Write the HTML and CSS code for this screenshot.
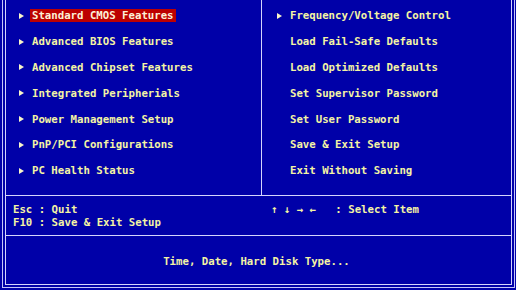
FILE: index.html
```html
<!DOCTYPE html>
<html>
<head>
  <title>CMOS Setup Utility</title>
  <link rel="stylesheet" href="styles.css">
</head>
<body>
  <div class="outer">
    <div class="inner">
      <div class="menu">
        <ul class="col col-left">
          <li class="item"><span class="arrow"></span><span class="label selected">Standard CMOS Features</span></li>
          <li class="item"><span class="arrow"></span><span class="label">Advanced BIOS Features</span></li>
          <li class="item"><span class="arrow"></span><span class="label">Advanced Chipset Features</span></li>
          <li class="item"><span class="arrow"></span><span class="label">Integrated Peripherials</span></li>
          <li class="item"><span class="arrow"></span><span class="label">Power Management Setup</span></li>
          <li class="item"><span class="arrow"></span><span class="label">PnP/PCI Configurations</span></li>
          <li class="item"><span class="arrow"></span><span class="label">PC Health Status</span></li>
        </ul>
        <ul class="col col-right">
          <li class="item"><span class="arrow"></span><span class="label">Frequency/Voltage Control</span></li>
          <li class="item"><span class="arrow none"></span><span class="label">Load Fail-Safe Defaults</span></li>
          <li class="item"><span class="arrow none"></span><span class="label">Load Optimized Defaults</span></li>
          <li class="item"><span class="arrow none"></span><span class="label">Set Supervisor Password</span></li>
          <li class="item"><span class="arrow none"></span><span class="label">Set User Password</span></li>
          <li class="item"><span class="arrow none"></span><span class="label">Save &amp; Exit Setup</span></li>
          <li class="item"><span class="arrow none"></span><span class="label">Exit Without Saving</span></li>
        </ul>
      </div>
      <div class="keys">
        <div class="keys-left">
          <div class="key-line">Esc : Quit</div>
          <div class="key-line">F10 : Save &amp; Exit Setup</div>
        </div>
        <div class="keys-right">
          <div class="key-line">↑ ↓ → ←   : Select Item</div>
        </div>
      </div>
      <div class="help">Time, Date, Hard Disk Type...</div>
    </div>
  </div>
</body>
</html>
```

FILE: styles.css
```css
* {
    box-sizing: border-box;
  }

  body {
    margin: 0;
    height: 290px;
    overflow: hidden;
    background-color: #0000a8;
    color: #f4f4a4;
    font-family: "DejaVu Sans Mono", "Liberation Mono", monospace;
    font-weight: bold;
    font-size: 10.7px;
  }

  .outer {
    margin: 0 1px 0 2px;
    height: 288px;
    padding: 0 2px 2px 2px;
    border: 1px solid #c4c4f8;
    border-top: none;
  }

  .inner {
    height: 285px;
    border: 1px solid #d4d4fc;
    border-top: none;
  }

  .menu {
    display: grid;
    grid-template-columns: 256px 1fr;
    height: 196px;
    border-bottom: 1px solid #d4d4fc;
  }

  .col {
    list-style: none;
    margin: 0;
    padding: 3px 0 0 13px;
  }

  .col-left {
    border-right: 1px solid #d4d4fc;
  }

  .col-right {
    padding-left: 15px;
  }

  .item {
    display: flex;
    align-items: center;
    gap: 6px;
    height: 25.8px;
  }

  .arrow {
    display: inline-block;
    width: 0;
    height: 0;
    border-left: 5px solid #f8f4c8;
    border-top: 3px solid transparent;
    border-bottom: 3px solid transparent;
  }

  .arrow.none {
    visibility: hidden;
  }

  .label {
    padding: 0 2px;
    line-height: 13px;
    white-space: pre;
  }

  .label.selected {
    background-color: #bc0000;
    color: #fcf0d8;
  }

  .keys {
    display: grid;
    grid-template-columns: 256px 1fr;
    height: 40px;
    padding-top: 7px;
    line-height: 13px;
    border-bottom: 1px solid #d4d4fc;
  }

  .keys-left {
    padding-left: 7px;
  }

  .keys-right {
    padding-left: 9px;
  }

  .key-line {
    white-space: pre;
  }

  .help {
    padding: 19px 4px 0 0;
    line-height: 13px;
    text-align: center;
  }
```
